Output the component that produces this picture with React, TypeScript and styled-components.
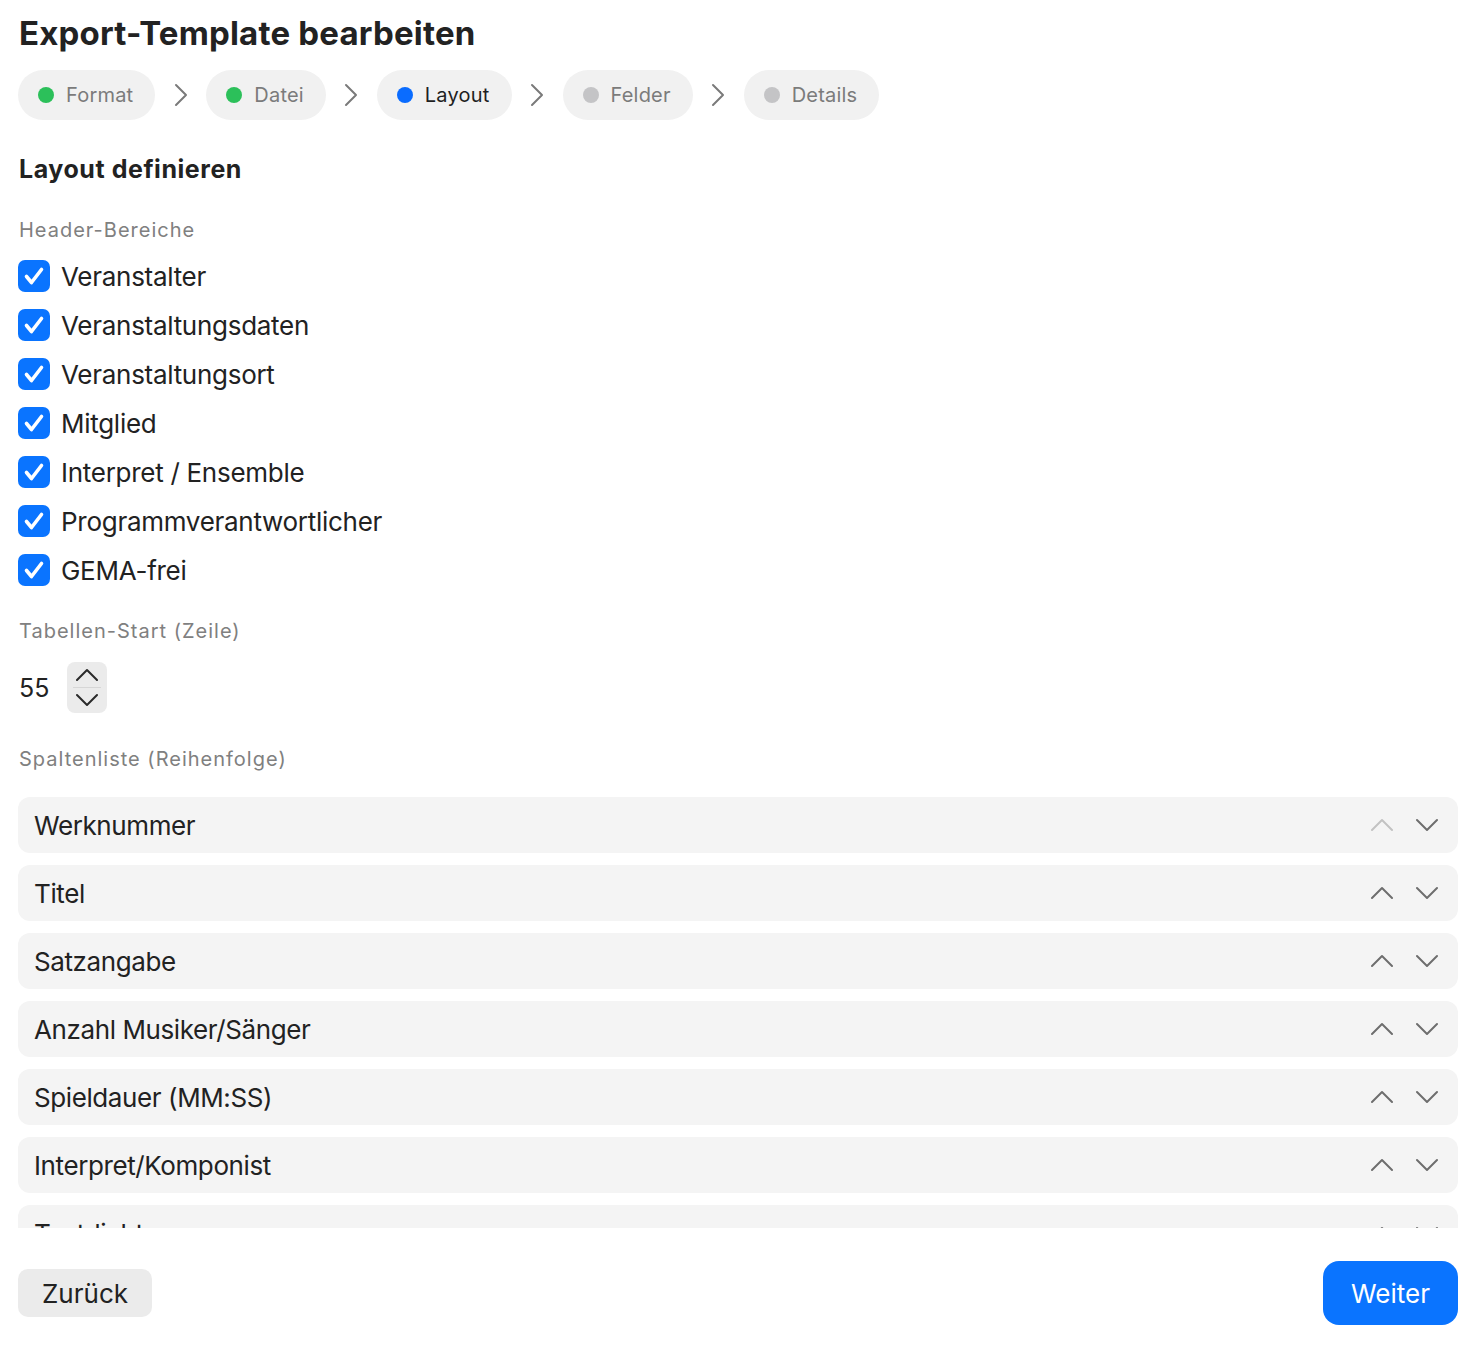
import React from 'react';
import styled, { createGlobalStyle } from 'styled-components';

const GlobalStyle = createGlobalStyle`
  html, body {
    margin: 0;
    padding: 0;
    background: #ffffff;
  }
  body {
    font-family: Inter, "Noto Sans", "Liberation Sans", sans-serif;
    color: #1f1f1f;
    -webkit-font-smoothing: antialiased;
  }
  * {
    box-sizing: border-box;
  }
`;

type StepState = 'done' | 'active' | 'todo';

const steps: { label: string; state: StepState }[] = [
  { label: 'Format', state: 'done' },
  { label: 'Datei', state: 'done' },
  { label: 'Layout', state: 'active' },
  { label: 'Felder', state: 'todo' },
  { label: 'Details', state: 'todo' },
];

const headerAreas = [
  'Veranstalter',
  'Veranstaltungsdaten',
  'Veranstaltungsort',
  'Mitglied',
  'Interpret / Ensemble',
  'Programmverantwortlicher',
  'GEMA-frei',
];

const columns = [
  'Werknummer',
  'Titel',
  'Satzangabe',
  'Anzahl Musiker/Sänger',
  'Spieldauer (MM:SS)',
  'Interpret/Komponist',
  'Textdichter',
];

const dotColors: Record<StepState, string> = {
  done: '#2cc05a',
  active: '#0a6cff',
  todo: '#c4c4c6',
};

const Chevron = ({ dir, size = 22, color = '#6e6e6e' }: { dir: 'up' | 'down' | 'right'; size?: number; color?: string }) => {
  if (dir === 'right') {
    return (
      <svg width={14} height={24} viewBox="0 0 14 24" fill="none">
        <path d="M2 2 L12 12 L2 22" stroke={color} strokeWidth={2} strokeLinecap="round" strokeLinejoin="round" />
      </svg>
    );
  }
  const d = dir === 'up' ? 'M1 12 L11 2 L21 12' : 'M1 2 L11 12 L21 2';
  return (
    <svg width={size} height={14} viewBox="0 0 22 14" fill="none">
      <path d={d} stroke={color} strokeWidth={2} strokeLinecap="round" strokeLinejoin="round" />
    </svg>
  );
};

const CheckIcon = () => (
  <svg width="32" height="32" viewBox="0 0 32 32" fill="none">
    <path d="M8.5 16.5 L13.5 22.5 L23.5 9.5" stroke="#fff" strokeWidth={3.6} strokeLinecap="round" strokeLinejoin="round" />
  </svg>
);

export default function App() {
  return (
    <>
      <GlobalStyle />
      <Page>
        <ScrollArea>
          <Title>Export-Template bearbeiten</Title>

          <Stepper>
            {steps.map((step, i) => (
              <React.Fragment key={step.label}>
                {i > 0 && (
                  <StepArrow>
                    <Chevron dir="right" color="#7a7a7a" />
                  </StepArrow>
                )}
                <StepChip>
                  <Dot $color={dotColors[step.state]} />
                  <StepLabel $active={step.state === 'active'}>{step.label}</StepLabel>
                </StepChip>
              </React.Fragment>
            ))}
          </Stepper>

          <SectionTitle>Layout definieren</SectionTitle>

          <FieldLabel>Header-Bereiche</FieldLabel>
          <CheckList>
            {headerAreas.map((label) => (
              <CheckRow key={label}>
                <CheckBox>
                  <CheckIcon />
                </CheckBox>
                <CheckText>{label}</CheckText>
              </CheckRow>
            ))}
          </CheckList>

          <FieldLabel $top={33}>Tabellen-Start (Zeile)</FieldLabel>
          <NumberRow>
            <NumberValue>55</NumberValue>
            <StepperControl>
              <StepperHalf>
                <Chevron dir="up" size={22} color="#2a2a2a" />
              </StepperHalf>
              <StepperDivider />
              <StepperHalf>
                <Chevron dir="down" size={22} color="#2a2a2a" />
              </StepperHalf>
            </StepperControl>
          </NumberRow>

          <FieldLabel $top={34}>Spaltenliste (Reihenfolge)</FieldLabel>
          <ColumnList>
            {columns.map((col, i) => (
              <ColumnRow key={col}>
                <ColumnName>{col}</ColumnName>
                <ReorderButtons>
                  <IconButton>
                    <Chevron dir="up" color={i === 0 ? '#c2c2c2' : '#6e6e6e'} />
                  </IconButton>
                  <IconButton>
                    <Chevron dir="down" color="#6e6e6e" />
                  </IconButton>
                </ReorderButtons>
              </ColumnRow>
            ))}
          </ColumnList>
        </ScrollArea>

        <Footer>
          <SecondaryButton>Zurück</SecondaryButton>
          <PrimaryButton>Weiter</PrimaryButton>
        </Footer>
      </Page>
    </>
  );
}

const Page = styled.div`
  height: 1348px;
  display: flex;
  flex-direction: column;
  background: #fff;
`;

const ScrollArea = styled.div`
  height: 1228px;
  overflow: hidden;
  padding: 13px 22px 0 18px;
  display: flex;
  flex-direction: column;
`;

const Title = styled.h1`
  margin: 0 0 0 1px;
  font-size: 33px;
  line-height: 40px;
  font-weight: 700;
  letter-spacing: 0.2px;
  color: #222;
`;

const Stepper = styled.div`
  margin-top: 17px;
  display: flex;
  align-items: center;
`;

const StepChip = styled.div`
  height: 50px;
  display: flex;
  align-items: center;
  gap: 12px;
  padding: 0 22px 0 20px;
  border-radius: 25px;
  background: #f1f1f1;
`;

const Dot = styled.span<{ $color: string }>`
  width: 16px;
  height: 16px;
  border-radius: 50%;
  background: ${(p) => p.$color};
`;

const StepLabel = styled.span<{ $active: boolean }>`
  font-size: 20px;
  color: ${(p) => (p.$active ? '#1f1f1f' : '#7b7b7b')};
  letter-spacing: 0.2px;
`;

const StepArrow = styled.div`
  width: 51px;
  display: flex;
  justify-content: center;
  align-items: center;
`;

const SectionTitle = styled.h2`
  margin: 34px 0 0 1px;
  font-size: 25px;
  line-height: 30px;
  font-weight: 700;
  letter-spacing: 0.55px;
  color: #222;
`;

const FieldLabel = styled.div<{ $top?: number }>`
  margin-top: ${(p) => p.$top ?? 34}px;
  margin-left: 1px;
  font-size: 20px;
  line-height: 24px;
  color: #808080;
  letter-spacing: 1px;
`;

const CheckList = styled.div`
  margin-top: 18px;
  display: flex;
  flex-direction: column;
  gap: 17px;
`;

const CheckRow = styled.label`
  display: flex;
  align-items: center;
  gap: 11px;
  height: 32px;
`;

const CheckBox = styled.span`
  width: 32px;
  height: 32px;
  border-radius: 7px;
  background: #0a74ff;
  display: flex;
  align-items: center;
  justify-content: center;
`;

const CheckText = styled.span`
  font-size: 26px;
  letter-spacing: -0.28px;
  color: #222;
`;

const NumberRow = styled.div`
  margin-top: 19px;
  display: flex;
  align-items: center;
  gap: 18px;
`;

const NumberValue = styled.span`
  font-size: 25px;
  color: #222;
  margin-left: 1px;
`;

const StepperControl = styled.div`
  width: 40px;
  height: 51px;
  border-radius: 8px;
  background: #ebebeb;
  display: flex;
  flex-direction: column;
  align-items: center;
  justify-content: center;
`;

const StepperHalf = styled.div`
  height: 24px;
  display: flex;
  align-items: center;
  justify-content: center;
`;

const StepperDivider = styled.div`
  width: 28px;
  height: 1px;
  background: #d6d6d6;
`;

const ColumnList = styled.div`
  margin-top: 26px;
  display: flex;
  flex-direction: column;
  gap: 12px;
`;

const ColumnRow = styled.div`
  height: 56px;
  flex-shrink: 0;
  display: flex;
  align-items: center;
  justify-content: space-between;
  padding: 0 20px 0 16px;
  border-radius: 12px;
  background: #f4f4f4;
`;

const ColumnName = styled.span`
  font-size: 26px;
  letter-spacing: -0.4px;
  color: #222;
`;

const ReorderButtons = styled.div`
  display: flex;
  align-items: center;
  gap: 23px;
`;

const IconButton = styled.button`
  border: none;
  background: none;
  padding: 0;
  display: flex;
  align-items: center;
  cursor: pointer;
`;

const Footer = styled.div`
  flex: 1;
  display: flex;
  align-items: center;
  justify-content: space-between;
  padding: 10px 22px 0 18px;
`;

const SecondaryButton = styled.button`
  height: 48px;
  padding: 0 24px;
  border: none;
  border-radius: 10px;
  background: #ebebeb;
  font-family: inherit;
  font-size: 26px;
  color: #222;
`;

const PrimaryButton = styled.button`
  height: 64px;
  padding: 0 28px;
  border: none;
  border-radius: 16px;
  background: #0a74ff;
  font-family: inherit;
  font-size: 26px;
  color: #fff;
`;
